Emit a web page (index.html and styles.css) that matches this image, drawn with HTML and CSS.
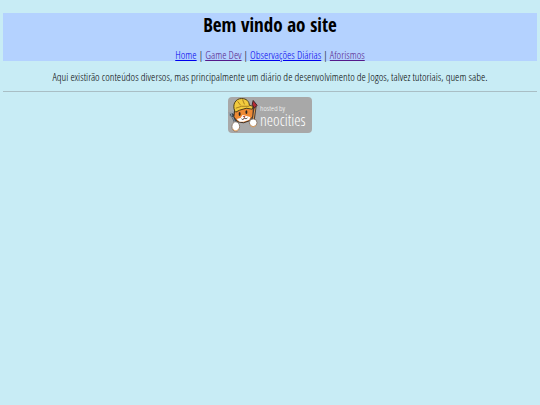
FILE: index.html
```html
<!DOCTYPE html>
<html lang="pt-BR">
<head>
    <meta charset="UTF-8">
    <meta name="viewport" content="width=device-width, initial-scale=1.0">
    <title>Bem vindo ao site</title>
    <link rel="stylesheet" href="styles.css">
</head>
<body>
    <header class="header">
        <h1>Bem vindo ao site</h1>
        <nav>
            <a href="index.html">Home</a> |
            <a class="visited" href="gamedev.html">Game Dev</a> |
            <a href="observacoes.html">Observações Diárias</a> |
            <a class="visited" href="aforismos.html">Aforismos</a>
        </nav>
    </header>

    <p class="intro">Aqui existirão conteúdos diversos, mas principalmente um diário de desenvolvimento de Jogos, talvez tutoriais, quem sabe.</p>

    <hr>

    <footer>
        <a class="badge" href="https://neocities.org">
            <svg class="cat" viewBox="0 0 32 36" aria-hidden="true">
                <!-- fork -->
                <path d="M4 18l2 2 3 7" fill="none" stroke="#3c4854" stroke-width="4" stroke-linecap="round"/>
                <path d="M1 15l1 4 3 2 2-3-2-4M3 15l1 4M5 20l3 8" fill="none" stroke="#8b99a4" stroke-width="1"/>
                <!-- head -->
                <path d="M7 12L6 20l4 5 6 1 6-2 4-5 0-9-7 1z" fill="#ee8a35" stroke="#3a2b20" stroke-width="1"/>
                <path d="M15 18l-2 3-4 1 3 3 4 0 6-2 1-3-4-1z" fill="#fff"/>
                <path d="M7 14C4 7 8 1 14 1c5 0 8 3 8 7l4 1-1 3-6-1-7 2-4 2z" fill="#f2cb3e" stroke="#4a3d17" stroke-width="1"/>
                <path d="M10 4l3 4M15 2l2 5M8 11l6-2 8 0" fill="none" stroke="#a67e20" stroke-width="1"/>
                <ellipse cx="12" cy="17" rx="1" ry="2" fill="#252525"/>
                <ellipse cx="19" cy="15" rx="1" ry="2" fill="#252525"/>
                <path d="M15 19h3l-1 2z" fill="#b64832"/>
                <path d="M14 22c1 1 2 1 3-1 1 1 2 1 3 0" fill="none" stroke="#46352c" stroke-width="1"/>
                <!-- brush -->
                <path d="M28 9l-2 15" stroke="#4b3a30" stroke-width="3" stroke-linecap="round"/>
                <path d="M28 10l-2 13" stroke="#e9a04b" stroke-width="1"/>
                <path d="M26 3l-1 4 2 4 3-3z" fill="#b52b34" stroke="#3b2426" stroke-width="1"/>
                <!-- paws -->
                <ellipse cx="8" cy="30" rx="4" ry="5" fill="#fff" stroke="#8a7a6c" stroke-width="1"/>
                <path d="M5 32c1 3 5 3 6 0" fill="none" stroke="#e7a45d" stroke-width="1"/>
                <ellipse cx="26" cy="26" rx="4" ry="4" fill="#fff" stroke="#8a7a6c" stroke-width="1"/>
                <path d="M23 28c1 3 5 3 6 0" fill="none" stroke="#e7a45d" stroke-width="1"/>
            </svg>
            <span class="badge-text">
                <span class="hosted">hosted by</span>
                <span class="brand">neocities</span>
            </span>
        </a>
    </footer>
</body>
</html>
```
FILE: styles.css
```css
body {
    margin: 13px 3px 0;
    background-color: #c8ecf5;
    color: #000;
    font-family: "Open Sans Condensed Light", "Roboto Condensed", sans-serif;
    font-size: 11px;
    line-height: 12px;
    text-align: center;
}

.header {
    background-color: #b4d2ff;
}

h1 {
    margin: 0 0 12px;
    font-family: "Open Sans Condensed", "DejaVu Sans Condensed", sans-serif;
    font-size: 19px;
    line-height: 24px;
}

a {
    color: #0000ee;
}

.visited {
    color: #551a8b;
}

.intro {
    margin: 10px 0 8px;
}

hr {
    margin: 0 0 5px;
    border: 0;
    border-top: 1px solid #a9bec5;
}

.badge {
    display: inline-flex;
    gap: 1px;
    width: 84px;
    height: 36px;
    border-radius: 4px;
    background-color: #a8a8a8;
    color: #fff;
    text-align: left;
    text-decoration: none;
}

.cat {
    flex: none;
    width: 31px;
    height: 36px;
}

.badge-text {
    display: flex;
    flex-direction: column;
    padding-top: 6px;
}

.hosted {
    font-size: 8px;
    line-height: 9px;
}

.brand {
    font-size: 16px;
    line-height: 16px;
}
```
